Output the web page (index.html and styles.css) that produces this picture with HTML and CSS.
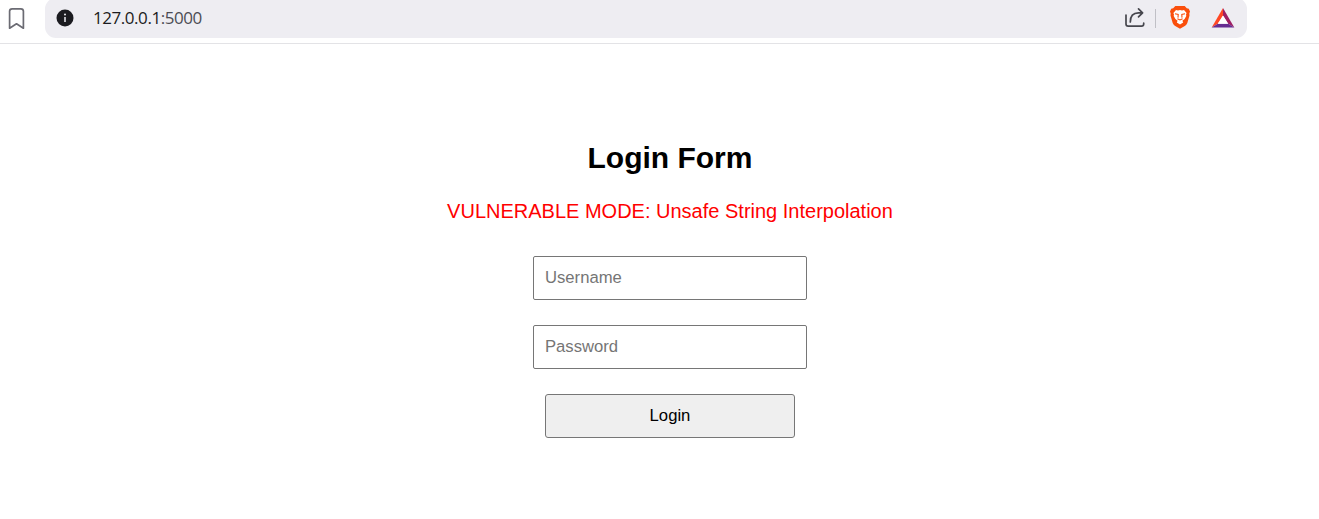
FILE: index.html
```
<!DOCTYPE html>
<html lang="en">
<head>
<meta charset="utf-8">
<title>Login Form</title>
<link rel="stylesheet" href="styles.css">
</head>
<body>
<header class="toolbar">
  <svg class="bookmark" width="18" height="24" viewBox="0 0 18 24" fill="none" stroke="#6b6b73" stroke-width="1.7" stroke-linejoin="round"><path d="M1.6 4.3Q1.6 1.8 4.1 1.8H12.9Q15.4 1.8 15.4 4.3V21.2L8.5 16.8L1.6 21.2Z"/></svg>
  <div class="address">
    <svg class="info" width="18" height="18" viewBox="0 0 18 18"><circle cx="9" cy="9" r="8.5" fill="#1b1b20"/><path d="M9 8V13" stroke="#eeedf2" stroke-width="1.5"/><circle cx="9" cy="5.5" r="1" fill="#eeedf2"/></svg>
    <span class="url">127.0.0.1<span class="port">:5000</span></span>
    <svg class="share" width="22" height="22" viewBox="0 0 22 22" fill="none" stroke="#46464d" stroke-width="1.7" stroke-linecap="round" stroke-linejoin="round"><path d="M2 8V17Q2 19.2 4.2 19.2H17.5Q19.7 19.2 19.7 17V16.2M6.3 15Q6.3 5.8 14.5 5.8H18.5M14.5 1.8L18.6 5.8L14.5 9.8"/></svg>
    <i class="divider"></i>
    <svg class="shield" width="20" height="24" viewBox="0 0 20 24"><path fill="#fa4f0c" d="M5.3 1H14.7L16.8 3.3L18.8 3.7L20 6.6L19.3 8.4L19.5 10.5L17.3 18Q16.7 19.7 15.2 20.7L10 23.7L4.8 20.7Q3.3 19.7 2.7 18L.5 10.5L.7 8.4L0 6.6L1.2 3.7L3.2 3.3Z"/><path fill="#fff" d="M6 5L8 5.4L10 5L12 5.4L14 5L16.6 8L16 9.5L16.3 11L14.6 14L12.4 15.8L13.2 17.4L10 19.6L6.8 17.4L7.6 15.8L5.4 14L3.7 11L4 9.5L3.4 8Z"/><path fill="none" stroke="#fa4f0c" stroke-width="1.1" d="M5 8.8L8.2 9.5L8 12.6M15 8.8L11.8 9.5L12 12.6M7.4 13.8L10 15L12.6 13.8"/></svg>
    <svg class="rewards" width="24" height="20" viewBox="0 0 24 20"><path fill="#ff4724" d="M12 0V7.5L6.8 15.8L.7 19.5Z"/><path fill="#9e1f63" d="M12 0L23.3 19.5L17.2 15.8L12 7.5Z"/><path fill="#662d91" d="M.7 19.5L6.8 15.8H17.2L23.3 19.5Z"/><path fill="#fff" d="M12 7.5L17.2 15.8H6.8Z"/></svg>
  </div>
</header>
<main class="page">
  <h2 class="title">Login Form</h2>
  <p class="mode">VULNERABLE MODE: Unsafe String Interpolation</p>
  <form class="form">
    <input class="field" type="text" placeholder="Username">
    <input class="field" type="password" placeholder="Password">
    <button class="submit" type="button">Login</button>
  </form>
</main>
</body>
</html>
```
FILE: styles.css
```
* { box-sizing: border-box; }
body {
  margin: 0;
  height: 519px;
  overflow: hidden;
  background: #fff;
  font-family: "Liberation Sans", Arial, sans-serif;
}
.toolbar {
  display: flex;
  align-items: flex-start;
  height: 44px;
  padding-left: 8px;
  border-bottom: 1px solid #e3e3e6;
}
.bookmark { margin-top: 7px; }
.address {
  display: flex;
  align-items: center;
  width: 1202px;
  height: 40px;
  margin: -2px 0 0 19px;
  padding: 2px 12px 0 11px;
  border-radius: 11px;
  background: #eeedf2;
}
.address > * { flex: none; }
.info { margin-top: -2px; }
.url {
  margin: -2px auto 0 19px;
  font: 17px/24px "Open Sans", "Noto Sans", sans-serif;
  letter-spacing: -0.45px;
  color: #1b1b20;
}
.port { color: #4c4c54; }
.share { margin-top: -2px; }
.divider {
  width: 1px;
  height: 19px;
  margin: -2px 14px 0 9px;
  background: #c0c0c6;
}
.shield { margin-top: -4px; }
.rewards { margin: -2px 0 0 21px; }
.page {
  padding: 97px 0 0 21px;
  text-align: center;
}
.title {
  margin: 0;
  font-size: 30px;
  line-height: 34px;
}
.mode {
  margin: 25px 0 0;
  font-size: 20px;
  line-height: 23px;
  color: #f00;
}
.form {
  display: flex;
  flex-direction: column;
  align-items: center;
  gap: 25px;
  margin-top: 33px;
}
.field, .submit {
  height: 44px;
  margin: 0;
  border: 1px solid #767676;
  border-radius: 2px;
  font: 16.667px "Liberation Sans", Arial, sans-serif;
}
.field {
  width: 274px;
  padding: 0 11px;
  background: #fff;
}
.field::placeholder { color: #757575; }
.submit {
  width: 250px;
  border-radius: 3px;
  background: #efefef;
  color: #000;
}
```
